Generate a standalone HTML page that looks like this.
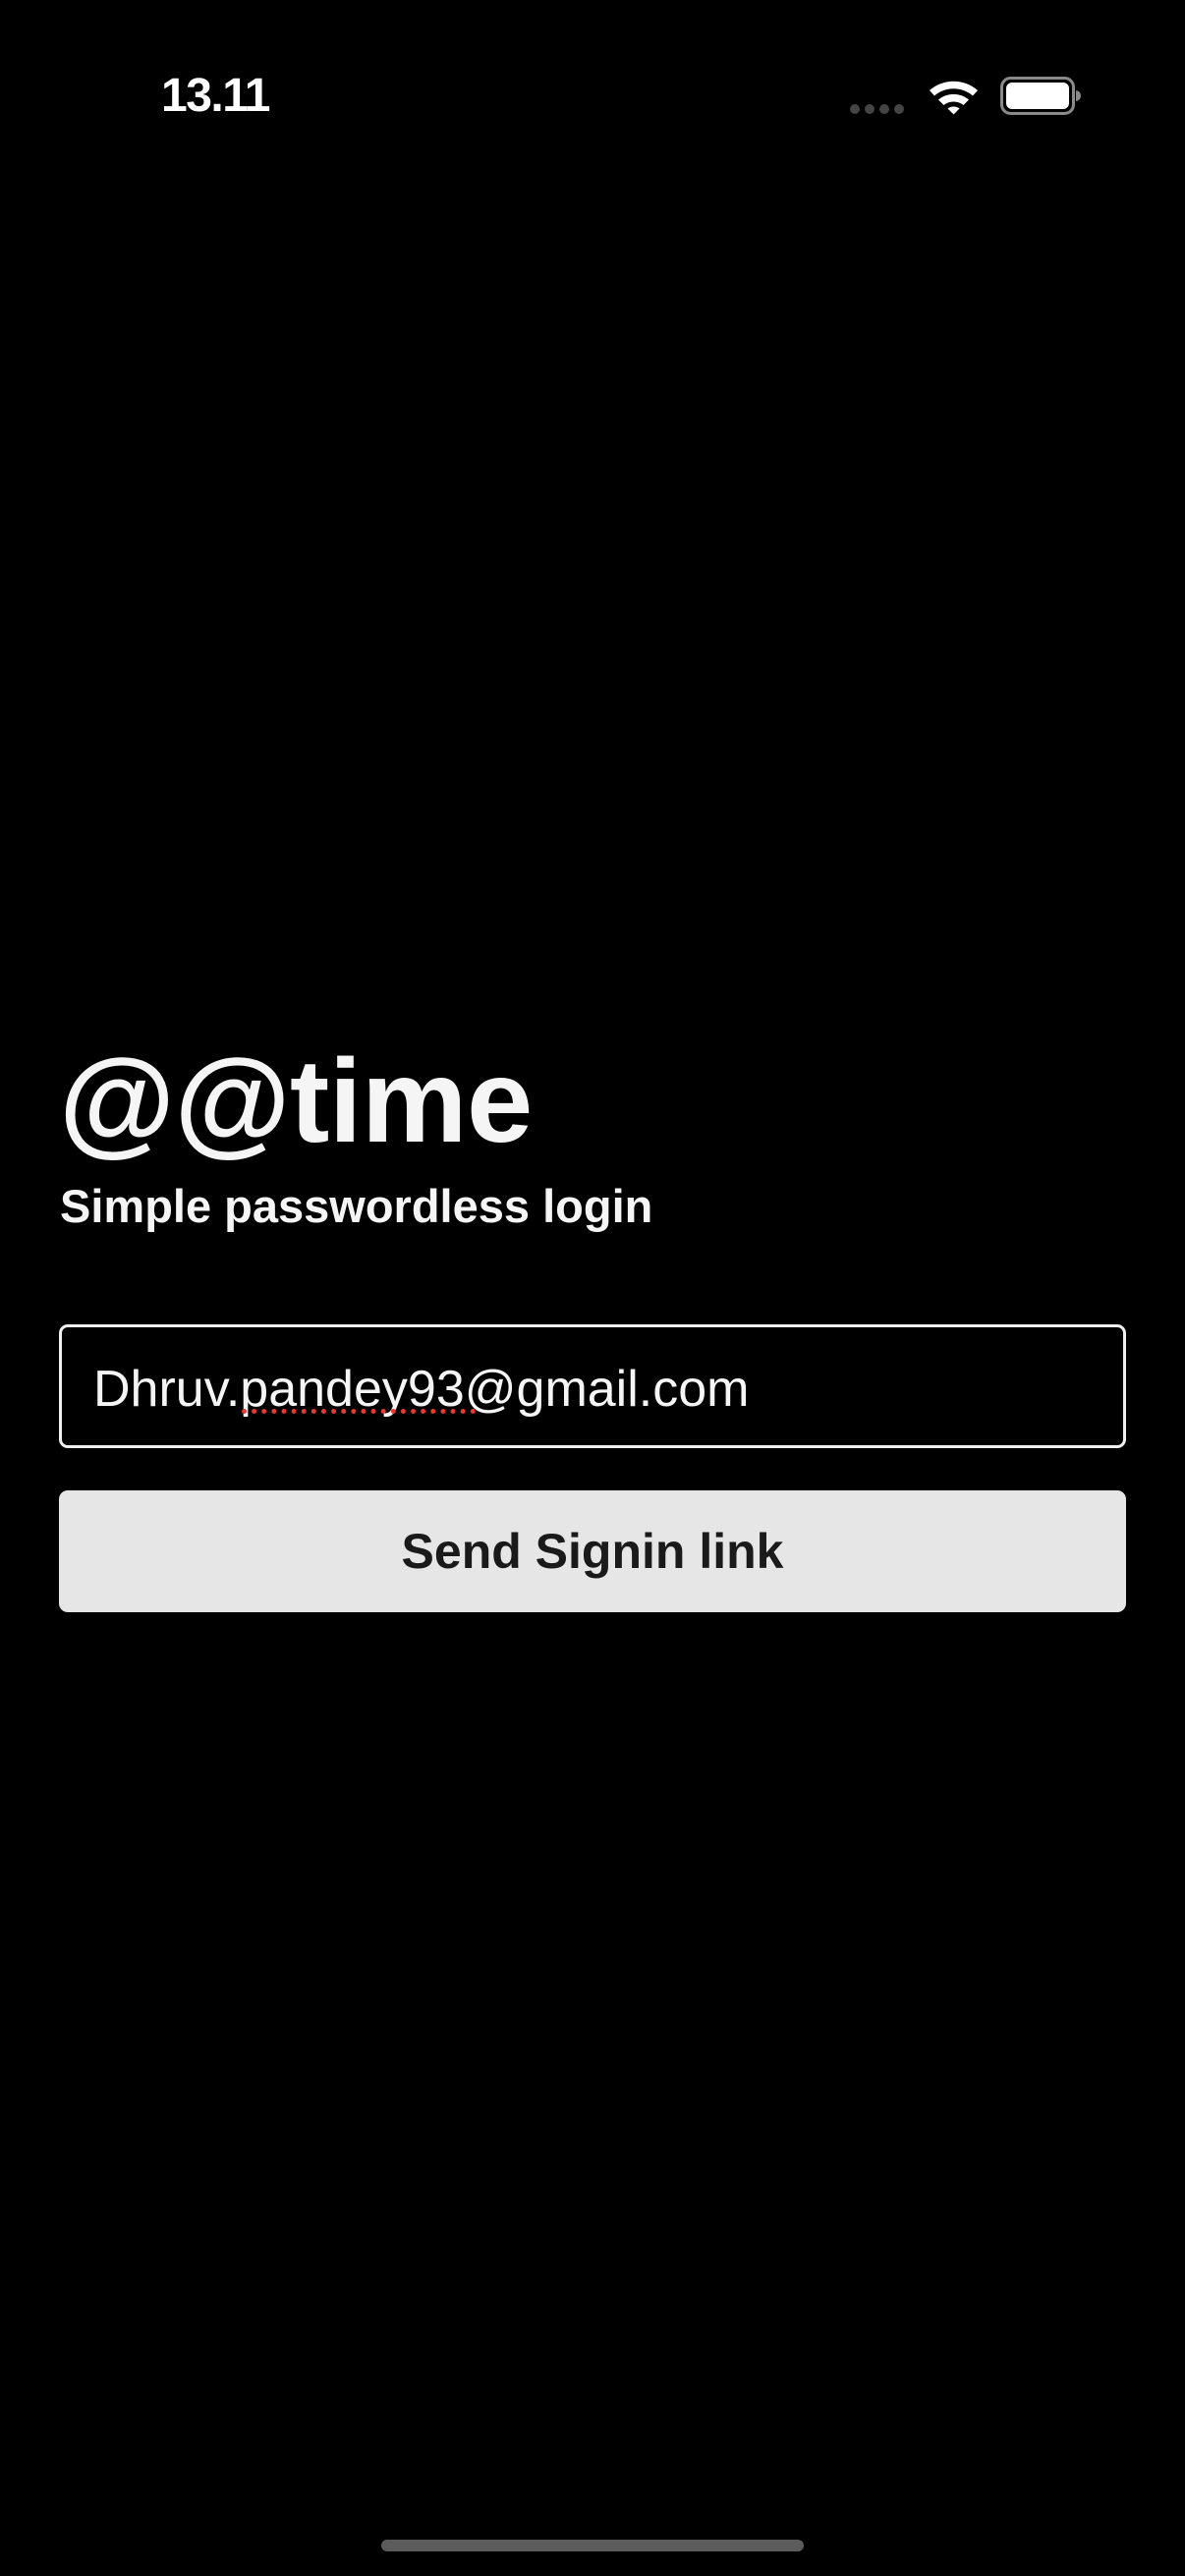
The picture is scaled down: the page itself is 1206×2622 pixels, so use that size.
<!DOCTYPE html>
<html><head><meta charset="utf-8"><style>
html,body{margin:0;padding:0;background:#000;}
body{width:1206px;height:2622px;position:relative;overflow:hidden;font-family:"Liberation Sans",sans-serif;color:#f5f5f5;}
.abs{position:absolute;}
</style></head><body>
<div class="abs" style="left:164px;top:70px;font-size:48px;font-weight:bold;letter-spacing:-1.5px;color:#fff;line-height:56px;">13.11</div>
<svg class="abs" style="left:860px;top:74px" width="250" height="50" viewBox="860 74 250 50">
<g fill="#444"><circle cx="870" cy="111" r="5"/><circle cx="885" cy="111" r="5"/><circle cx="900" cy="111" r="5"/><circle cx="915" cy="111" r="5"/></g>
<g fill="#fff">
<path d="M946 92 A37 37 0 0 1 995 92 L990 97.5 A30 30 0 0 0 951 97.5 Z"/>
<path d="M955 101.5 A24 24 0 0 1 986 101.5 L980.5 107 A16 16 0 0 0 960.5 107 Z"/>
<path d="M964.5 110.5 A10 10 0 0 1 976.5 110.5 L970.5 116.5 Z"/>
</g>
<rect x="1019.5" y="79.5" width="73" height="36" rx="9" fill="none" stroke="#8a8a8a" stroke-width="3"/>
<rect x="1024" y="84" width="64" height="27" rx="6" fill="#fff"/>
<path d="M1095 92 Q1100 93 1100 97.5 Q1100 102 1095 103 Z" fill="#8a8a8a"/>
</svg>
<div class="abs" style="left:60px;top:1050px;font-size:121px;font-weight:bold;letter-spacing:-0.5px;line-height:140px;">@@time</div>
<div class="abs" style="left:61px;top:1198px;font-size:47px;font-weight:bold;line-height:60px;">Simple passwordless login</div>
<div class="abs" style="left:60px;top:1348px;width:1080px;height:120px;border:3px solid #f0f0f0;border-radius:9px;"></div>
<div class="abs" style="left:95px;top:1384px;font-size:52px;line-height:60px;color:#f5f5f5;">Dhruv.pandey93@gmail.com</div>
<div class="abs" style="left:246px;top:1434px;width:238px;height:0;border-top:5px dotted #e53935;"></div>
<div class="abs" style="left:60px;top:1517px;width:1086px;height:124px;background:#e6e6e6;border-radius:9px;text-align:center;line-height:124px;font-size:50px;font-weight:bold;color:#1a1a1a;">Send Signin link</div>
<div class="abs" style="left:388px;top:2585px;width:430px;height:12px;border-radius:6px;background:#5c5c5c;"></div>
</body></html>
